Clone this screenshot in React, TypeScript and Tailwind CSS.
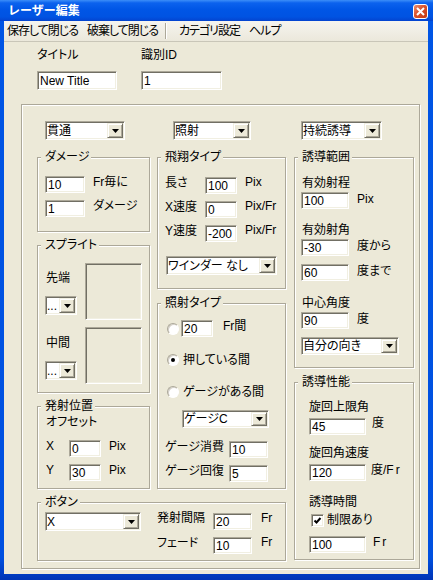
import type { ReactNode } from 'react';

const SUNKEN =
  'border border-t-[#aca899] border-l-[#aca899] border-b-white border-r-white shadow-[inset_1px_1px_0_#716f64,inset_-1px_-1px_0_#f1efe2]';
const RAISED =
  'border border-t-[#f1efe2] border-l-[#f1efe2] border-b-[#716f64] border-r-[#716f64] shadow-[inset_1px_1px_0_#fff,inset_-1px_-1px_0_#aca899] bg-[#ece9d8]';

function Edit({ value, className }: { value: string; className: string }) {
  return (
    <div className={`flex items-center bg-white pl-[2px] whitespace-nowrap overflow-hidden shrink-0 ${SUNKEN} ${className}`}>
      {value}
    </div>
  );
}

function Combo({ text, className }: { text: string; className: string }) {
  return (
    <div className={`flex bg-white shrink-0 ${SUNKEN} ${className}`}>
      <div className="flex-1 flex items-center pl-[1px] overflow-hidden whitespace-nowrap">{text}</div>
      <div className={`w-[16px] m-[1px] flex items-center justify-center ${RAISED}`}>
        <svg width="7" height="4" viewBox="0 0 7 4">
          <path d="M0 0h7L3.5 4z" fill="#000" />
        </svg>
      </div>
    </div>
  );
}

function Group({ label, className, children }: { label?: string; className: string; children?: ReactNode }) {
  return (
    <div className={`relative flex flex-col border border-[#aca899] shadow-[inset_1px_1px_0_#fff,1px_1px_0_#fff] ${className}`}>
      {label && (
        <span className="absolute -top-[8px] left-[3px] pl-[4px] pr-[2px] bg-[#ece9d8] whitespace-nowrap">{label}</span>
      )}
      {children}
    </div>
  );
}

function Radio({ checked, className = '' }: { checked?: boolean; className?: string }) {
  return (
    <div
      className={`w-[12px] h-[12px] shrink-0 rounded-full bg-white border border-t-[#aca899] border-l-[#aca899] border-b-white border-r-white shadow-[inset_1px_1px_0_#d4d0c8] flex items-center justify-center ${className}`}
    >
      {checked && <div className="w-[4px] h-[4px] rounded-full bg-black" />}
    </div>
  );
}

function Check() {
  return (
    <div className={`w-[13px] h-[13px] shrink-0 bg-white flex items-center justify-center ${SUNKEN}`}>
      <svg width="9" height="9" viewBox="0 0 9 9">
        <path d="M1.5 4.5L3.5 6.5L7.5 2" stroke="#000" strokeWidth="2" fill="none" />
      </svg>
    </div>
  );
}

function Preview() {
  return <div className={`w-[57px] h-[57px] shrink-0 bg-[#ece9d8] ${SUNKEN}`} />;
}

export default function App() {
  return (
    <div className="w-[433px] h-[580px] flex flex-col overflow-hidden bg-[#0052e2] font-['Liberation_Sans','Noto_Sans_CJK_JP',sans-serif] text-[12px] leading-[14px] text-black [font-feature-settings:'palt']">
      {/* title bar */}
      <div className="h-[21px] shrink-0 flex items-center justify-between pl-[8px] pr-[5px] bg-[linear-gradient(to_bottom,#3c8ef8_0%,#0b62ee_14%,#0056e6_45%,#0053e2_80%,#0343cf_100%)]">
        <span className="font-bold text-white [font-feature-settings:normal]">レーザー編集</span>
        <div className="w-[15px] h-[15px] mt-[2px] rounded-[3px] border border-white flex items-center justify-center bg-[linear-gradient(135deg,#ec8f72,#d9522b_45%,#c33a13)]">
          <svg width="9" height="9" viewBox="0 0 9 9">
            <path d="M1 1L8 8M8 1L1 8" stroke="#fff" strokeWidth="2" />
          </svg>
        </div>
      </div>

      <div className="flex-1 flex flex-col pl-[4px] pr-[5px] pb-[6px] bg-[linear-gradient(to_bottom,#0055e5,#0050e0_96%,#0034b5)]">
        {/* menu */}
        <div className="h-[21px] shrink-0 flex items-center pl-[3px] border-b border-[#c9c6b8] bg-[linear-gradient(to_bottom,#f5f4ef,#ebe8db)] tracking-[-1px]">
          <span className="w-[80px] whitespace-nowrap">保存して閉じる</span>
          <span className="w-[78px] whitespace-nowrap">破棄して閉じる</span>
          <div className="w-[2px] h-[16px] border-l border-[#aca899] border-r border-r-white" />
          <span className="ml-[12px] w-[70px] whitespace-nowrap">カテゴリ設定</span>
          <span className="whitespace-nowrap">ヘルプ</span>
        </div>

        {/* body */}
        <div className="flex-1 flex flex-col bg-[#ece9d8]">
          <div className="flex mt-[6px] ml-[33px]">
            <div className="w-[104px] flex flex-col">
              <span>タイトル</span>
              <Edit value="New Title" className="mt-[9px] w-[80px] h-[19px]" />
            </div>
            <div className="flex flex-col">
              <span>識別ID</span>
              <Edit value="1" className="mt-[9px] w-[81px] h-[19px]" />
            </div>
          </div>

          <Group className="mt-[14px] ml-[17px] w-[399px] h-[465px]">
            <div className="flex pl-[15px] pt-[16px]">
              <div className="w-[249px] flex flex-col">
                <div className="flex">
                  {/* left column */}
                  <div className="w-[113px] flex flex-col">
                    <Combo text="貫通" className="ml-[8px] w-[80px] h-[19px]" />
                    <Group label="ダメージ" className="mt-[17px] h-[75px]">
                      <div className="flex items-start mt-[18px] ml-[7px]">
                        <Edit value="10" className="w-[40px] h-[17px]" />
                        <span className="ml-[8px] -mt-[1px]">Fr毎に</span>
                      </div>
                      <div className="flex items-start mt-[7px] ml-[7px]">
                        <Edit value="1" className="w-[40px] h-[17px]" />
                        <span className="ml-[8px] -mt-[1px]">ダメージ</span>
                      </div>
                    </Group>
                    <Group label="スプライト" className="mt-[13px] h-[148px]">
                      <div className="flex mt-[17px] ml-[7px]">
                        <div className="w-[40px] flex flex-col">
                          <span className="mt-[8px] ml-[1px]">先端</span>
                          <Combo text="..." className="mt-[11px] w-[32px] h-[19px]" />
                        </div>
                        <Preview />
                      </div>
                      <div className="flex mt-[7px] ml-[7px]">
                        <div className="w-[40px] flex flex-col">
                          <span className="mt-[9px] ml-[1px]">中間</span>
                          <Combo text="..." className="mt-[11px] w-[32px] h-[19px]" />
                        </div>
                        <Preview />
                      </div>
                    </Group>
                    <Group label="発射位置" className="mt-[13px] h-[83px]">
                      <span className="mt-[8px] ml-[8px]">オフセット</span>
                      <div className="flex items-start mt-[11px] ml-[8px]">
                        <span className="w-[23px] -mt-[1px]">X</span>
                        <Edit value="0" className="w-[32px] h-[17px]" />
                        <span className="ml-[8px] -mt-[1px]">Pix</span>
                      </div>
                      <div className="flex items-start mt-[7px] ml-[8px]">
                        <span className="w-[23px] -mt-[1px]">Y</span>
                        <Edit value="30" className="w-[32px] h-[17px]" />
                        <span className="ml-[8px] -mt-[1px]">Pix</span>
                      </div>
                    </Group>
                  </div>

                  {/* middle column */}
                  <div className="ml-[7px] w-[129px] flex flex-col">
                    <Combo text="照射" className="ml-[16px] w-[78px] h-[19px]" />
                    <Group label="飛翔タイプ" className="mt-[17px] h-[132px]">
                      <div className="flex items-start mt-[19px] ml-[7px]">
                        <span className="w-[40px] -mt-[1px]">長さ</span>
                        <Edit value="100" className="w-[32px] h-[17px]" />
                        <span className="ml-[8px] -mt-[2px]">Pix</span>
                      </div>
                      <div className="flex items-start mt-[7px] ml-[7px]">
                        <span className="w-[40px] -mt-[1px]">X速度</span>
                        <Edit value="0" className="w-[32px] h-[17px]" />
                        <span className="ml-[8px] -mt-[2px]">Pix/Fr</span>
                      </div>
                      <div className="flex items-start mt-[7px] ml-[7px]">
                        <span className="w-[40px] -mt-[1px]">Y速度</span>
                        <Edit value="-200" className="w-[32px] h-[17px]" />
                        <span className="ml-[8px] -mt-[2px]">Pix/Fr</span>
                      </div>
                      <Combo text="ワインダー なし" className="mt-[14px] ml-[8px] w-[111px] h-[19px]" />
                    </Group>
                    <Group label="照射タイプ" className="mt-[14px] h-[186px]">
                      <div className="flex items-start mt-[16px] ml-[9px]">
                        <Radio className="mt-[3px]" />
                        <Edit value="20" className="ml-[2px] w-[32px] h-[17px]" />
                        <span className="ml-[10px] -mt-[1px]">Fr間</span>
                      </div>
                      <div className="flex items-center h-[14px] mt-[16px] ml-[9px]">
                        <Radio checked />
                        <span className="ml-[4px] whitespace-nowrap">押している間</span>
                      </div>
                      <div className="flex items-center h-[14px] mt-[18px] ml-[9px]">
                        <Radio />
                        <span className="ml-[4px] whitespace-nowrap">ゲージがある間</span>
                      </div>
                      <Combo text="ゲージC" className="mt-[11px] ml-[24px] w-[87px] h-[18px]" />
                      <div className="flex items-start mt-[13px] ml-[7px]">
                        <span className="w-[64px] -mt-[1px] whitespace-nowrap">ゲージ消費</span>
                        <Edit value="10" className="w-[39px] h-[17px]" />
                      </div>
                      <div className="flex items-start mt-[7px] ml-[7px]">
                        <span className="w-[64px] -mt-[1px] whitespace-nowrap">ゲージ回復</span>
                        <Edit value="5" className="w-[39px] h-[17px]" />
                      </div>
                    </Group>
                  </div>
                </div>

                <Group label="ボタン" className="mt-[13px] h-[59px]">
                  <div className="flex items-start ml-[7px]">
                    <Combo text="X" className="mt-[9px] w-[96px] h-[19px]" />
                    <div className="ml-[16px] flex flex-col">
                      <div className="flex items-start mt-[10px]">
                        <span className="w-[56px] -mt-[2px]">発射間隔</span>
                        <Edit value="20" className="w-[39px] h-[17px]" />
                        <span className="ml-[9px] -mt-[2px]">Fr</span>
                      </div>
                      <div className="flex items-start mt-[7px]">
                        <span className="w-[56px] -mt-[1px]">フェード</span>
                        <Edit value="10" className="w-[39px] h-[17px]" />
                        <span className="ml-[9px] -mt-[2px]">Fr</span>
                      </div>
                    </div>
                  </div>
                </Group>
              </div>

              {/* right column */}
              <div className="ml-[8px] w-[120px] flex flex-col">
                <Combo text="持続誘導" className="ml-[7px] w-[81px] h-[19px]" />
                <Group label="誘導範囲" className="mt-[17px] h-[211px]">
                  <span className="mt-[18px] ml-[7px]">有効射程</span>
                  <div className="flex items-start mt-[2px] ml-[6px]">
                    <Edit value="100" className="w-[48px] h-[17px]" />
                    <span className="ml-[8px]">Pix</span>
                  </div>
                  <span className="mt-[14px] ml-[7px]">有効射角</span>
                  <div className="flex items-start mt-[2px] ml-[6px]">
                    <Edit value="-30" className="w-[48px] h-[17px]" />
                    <span className="ml-[8px]">度から</span>
                  </div>
                  <div className="flex items-start mt-[8px] ml-[6px]">
                    <Edit value="60" className="w-[48px] h-[17px]" />
                    <span className="ml-[8px]">度まで</span>
                  </div>
                  <span className="mt-[15px] ml-[7px]">中心角度</span>
                  <div className="flex items-start mt-[2px] ml-[6px]">
                    <Edit value="90" className="w-[48px] h-[17px]" />
                    <span className="ml-[8px]">度</span>
                  </div>
                  <Combo text="自分の向き" className="mt-[8px] ml-[6px] w-[98px] h-[18px]" />
                </Group>
                <Group label="誘導性能" className="mt-[14px] h-[178px]">
                  <span className="mt-[17px] ml-[14px]">旋回上限角</span>
                  <div className="flex items-start mt-[4px] ml-[14px]">
                    <Edit value="45" className="w-[57px] h-[17px]" />
                    <span className="ml-[6px] -mt-[2px]">度</span>
                  </div>
                  <span className="mt-[11px] ml-[14px]">旋回角速度</span>
                  <div className="flex items-start mt-[4px] ml-[14px]">
                    <Edit value="120" className="w-[57px] h-[17px]" />
                    <span className="ml-[5px] -mt-[1px] whitespace-nowrap">度/F<span className="ml-[2px]">r</span></span>
                  </div>
                  <span className="mt-[14px] ml-[14px]">誘導時間</span>
                  <div className="flex items-center mt-[4px] ml-[16px]">
                    <Check />
                    <span className="ml-[3px]">制限あり</span>
                  </div>
                  <div className="flex items-start mt-[9px] ml-[14px]">
                    <Edit value="100" className="w-[57px] h-[17px]" />
                    <span className="ml-[7px] -mt-[1px]">F<span className="ml-[2px]">r</span></span>
                  </div>
                </Group>
              </div>
            </div>
          </Group>
        </div>
      </div>
    </div>
  );
}
